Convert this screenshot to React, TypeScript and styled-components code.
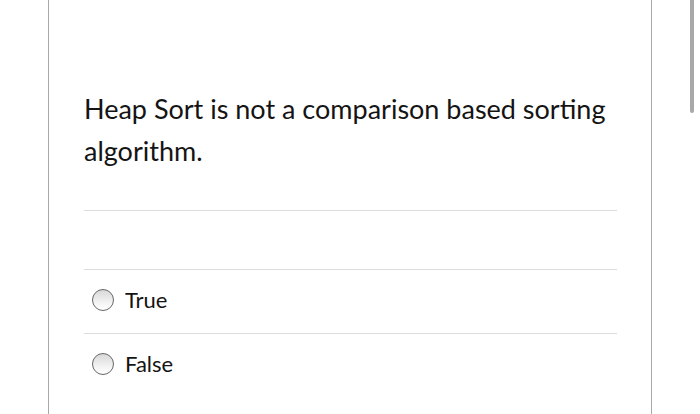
import styled, { createGlobalStyle } from "styled-components";

const GlobalStyle = createGlobalStyle`
  html, body {
    margin: 0;
    padding: 0;
    background: #fff;
    overflow: hidden;
  }
  body {
    font-family: Lato, "Liberation Sans", sans-serif;
    color: #141414;
  }
`;

const Page = styled.div`
  position: relative;
  width: 700px;
  height: 414px;
  overflow: hidden;
`;

const Card = styled.div`
  box-sizing: border-box;
  width: 604px;
  min-height: 414px;
  margin: 0 auto;
  padding: 88px 34px 0 35px;
  border-left: 1px solid #a8a8a8;
  border-right: 1px solid #a8a8a8;
`;

const Question = styled.div`
  font-size: 27px;
  line-height: 42px;
  padding-bottom: 38px;
  border-bottom: 1px solid #dcdcdc;
`;

const Spacer = styled.div`
  height: 58px;
`;

const Option = styled.label`
  box-sizing: border-box;
  display: flex;
  align-items: center;
  gap: 11px;
  height: 64px;
  padding: 0 0 4px 8px;
  border-top: 1px solid #dcdcdc;
  font-size: 22px;
`;

const Radio = styled.span`
  box-sizing: border-box;
  width: 22px;
  height: 22px;
  border-radius: 50%;
  border: 1.5px solid #666;
  background: linear-gradient(180deg, #d8d8d8 0%, #f2f2f2 60%, #fff 100%);
  flex-shrink: 0;
`;

const ScrollThumb = styled.div`
  position: absolute;
  top: 0;
  right: 6px;
  width: 4px;
  height: 113px;
  border-radius: 0 0 2px 2px;
  background: #a8a8a8;
`;

const options = ["True", "False"];

export default function App() {
  return (
    <>
      <GlobalStyle />
      <Page>
        <Card>
          <Question>
            Heap Sort is not a comparison based sorting algorithm.
          </Question>
          <Spacer />
          {options.map((o) => (
            <Option key={o}>
              <Radio />
              {o}
            </Option>
          ))}
        </Card>
        <ScrollThumb />
      </Page>
    </>
  );
}
